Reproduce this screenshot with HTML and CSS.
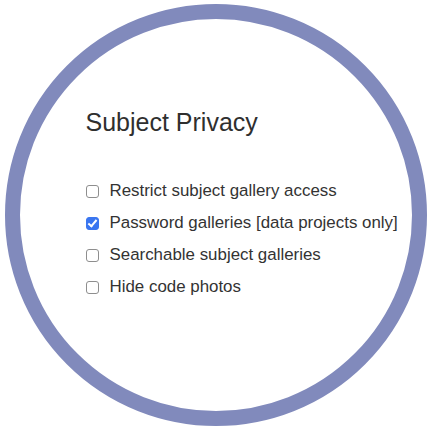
FILE: index.html
```html
<!DOCTYPE html>
<html>
<head>
<meta charset="utf-8">
<link rel="stylesheet" href="styles.css">
</head>
<body>
<div class="circle">
  <h2 class="title">Subject Privacy</h2>
  <ul class="options">
    <li class="option"><input type="checkbox" class="box"><span>Restrict subject gallery access</span></li>
    <li class="option"><input type="checkbox" class="box" checked><span>Password galleries [data projects only]</span></li>
    <li class="option"><input type="checkbox" class="box"><span>Searchable subject galleries</span></li>
    <li class="option"><input type="checkbox" class="box"><span>Hide code photos</span></li>
  </ul>
</div>
</body>
</html>
```

FILE: styles.css
```css
html, body {
  margin: 0;
  padding: 0;
  background: #ffffff;
}
body {
  font-family: "Liberation Sans", Arial, Helvetica, sans-serif;
  color: #333333;
}
.circle {
  box-sizing: border-box;
  width: 422px;
  height: 422px;
  margin: 4px 0 0 5px;
  border: 15.5px solid #818abc;
  border-radius: 50%;
  padding: 88.5px 0 0 65.5px;
}
.title {
  margin: 0;
  font-size: 25px;
  font-weight: 400;
  line-height: 29px;
  color: #2f2f2f;
}
.options {
  list-style: none;
  margin: 38.5px 0 0 0;
  padding: 0;
  display: flex;
  flex-direction: column;
}
.option {
  display: flex;
  align-items: center;
  height: 32px;
  font-size: 16.9px;
  color: #333333;
}
.box {
  appearance: none;
  -webkit-appearance: none;
  box-sizing: border-box;
  width: 13px;
  height: 13px;
  margin: 0 11px 0 0;
  border: 1px solid #8e8e8e;
  border-radius: 3px;
  background: #ffffff;
  flex: none;
  position: relative;
}
.box:checked {
  background: #3a76f0;
  border-color: #3a76f0;
}
.box:checked::after {
  content: "";
  position: absolute;
  left: 3.5px;
  top: 0.5px;
  width: 3px;
  height: 7px;
  border: solid #ffffff;
  border-width: 0 2px 2px 0;
  transform: rotate(40deg);
}
```
